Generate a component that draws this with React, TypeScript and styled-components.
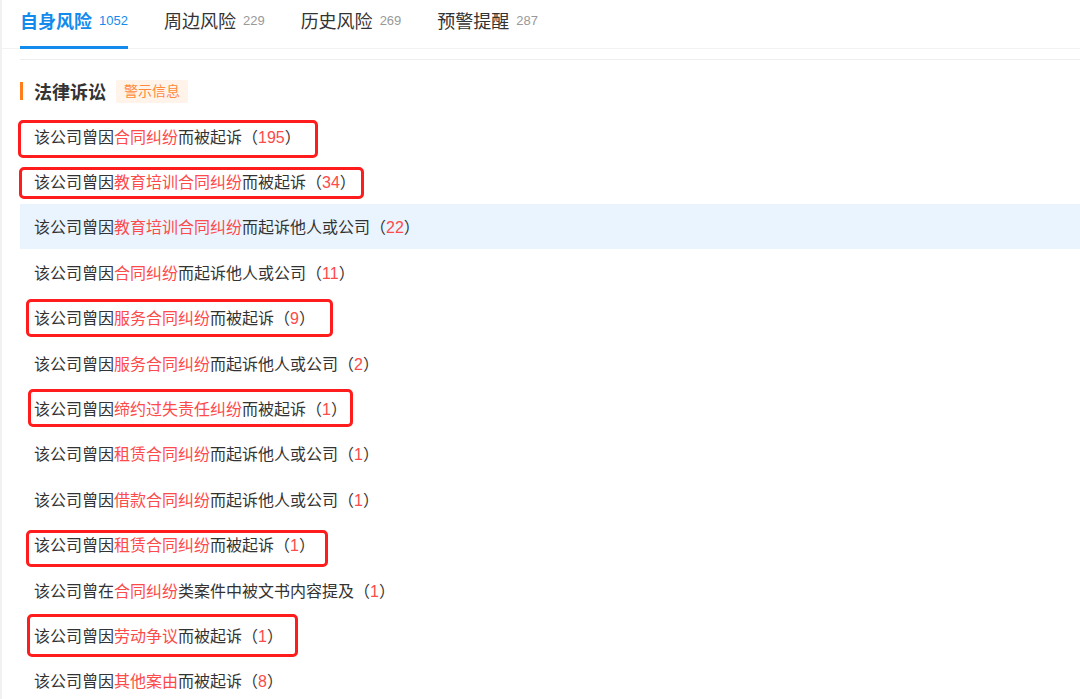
import { type FC } from "react";
import styled, { createGlobalStyle } from "styled-components";

const GlobalStyle = createGlobalStyle`
  html, body {
    margin: 0;
    padding: 0;
    background: #fff;
    font-family: "Liberation Sans", "Noto Sans CJK SC", sans-serif;
    color: #333;
  }
`;

interface Box {
  left: number;
  top: number;
  width: number;
  height: number;
}

interface RiskItem {
  lead: string;
  cause: string;
  tail: string;
  count: number;
  active?: boolean;
  box?: Box;
}

const tabs = [
  { name: "自身风险", count: 1052 },
  { name: "周边风险", count: 229 },
  { name: "历史风险", count: 269 },
  { name: "预警提醒", count: 287 },
];

const items: RiskItem[] = [
  { lead: "该公司曾因", cause: "合同纠纷", tail: "而被起诉", count: 195, box: { left: -2, top: 7, width: 300, height: 38 } },
  { lead: "该公司曾因", cause: "教育培训合同纠纷", tail: "而被起诉", count: 34, box: { left: -1, top: 9, width: 345, height: 32 } },
  { lead: "该公司曾因", cause: "教育培训合同纠纷", tail: "而起诉他人或公司", count: 22, active: true },
  { lead: "该公司曾因", cause: "合同纠纷", tail: "而起诉他人或公司", count: 11 },
  { lead: "该公司曾因", cause: "服务合同纠纷", tail: "而被起诉", count: 9, box: { left: 6, top: 4, width: 307, height: 38 } },
  { lead: "该公司曾因", cause: "服务合同纠纷", tail: "而起诉他人或公司", count: 2 },
  { lead: "该公司曾因", cause: "缔约过失责任纠纷", tail: "而被起诉", count: 1, box: { left: 8, top: 4, width: 325, height: 38 } },
  { lead: "该公司曾因", cause: "租赁合同纠纷", tail: "而起诉他人或公司", count: 1 },
  { lead: "该公司曾因", cause: "借款合同纠纷", tail: "而起诉他人或公司", count: 1 },
  { lead: "该公司曾因", cause: "租赁合同纠纷", tail: "而被起诉", count: 1, box: { left: 6, top: 8, width: 302, height: 37 } },
  { lead: "该公司曾在", cause: "合同纠纷", tail: "类案件中被文书内容提及", count: 1 },
  { lead: "该公司曾因", cause: "劳动争议", tail: "而被起诉", count: 1, box: { left: 7, top: 2, width: 271, height: 43 } },
  { lead: "该公司曾因", cause: "其他案由", tail: "而被起诉", count: 8 },
];

const App: FC = () => {
  return (
    <Page>
      <GlobalStyle />
      <TabBar>
        {tabs.map((tab, i) => (
          <Tab key={tab.name} $active={i === 0}>
            {tab.name}
            <TabCount $active={i === 0}>{tab.count}</TabCount>
          </Tab>
        ))}
      </TabBar>

      <Panel>
        <Heading>
          <HeadingTitle>法律诉讼</HeadingTitle>
          <Tag>警示信息</Tag>
        </Heading>

        <List>
          {items.map((item, i) => (
            <Row key={i} $active={item.active}>
              {item.lead}
              <Red>{item.cause}</Red>
              {item.tail}
              <Count>
                （<Red>{item.count}</Red>）
              </Count>
              {item.box && (
                <Mark
                  $left={item.box.left}
                  $top={item.box.top}
                  $width={item.box.width}
                  $height={item.box.height}
                />
              )}
            </Row>
          ))}
        </List>
      </Panel>
    </Page>
  );
};

export default App;

const Page = styled.div`
  min-height: 699px;
  border-left: 2px solid #f1f1f1;
  box-sizing: border-box;
  overflow: hidden;
`;

const TabBar = styled.div`
  display: flex;
  height: 48px;
  padding-left: 18px;
  border-bottom: 1px solid #f2f2f2;
`;

const Tab = styled.div<{ $active?: boolean }>`
  position: relative;
  display: flex;
  align-items: center;
  margin-right: 36px;
  padding-bottom: 8px;
  font-size: 18px;
  color: ${(p) => (p.$active ? "#128bed" : "#333")};
  font-weight: ${(p) => (p.$active ? 700 : 400)};

  &::after {
    content: "";
    display: ${(p) => (p.$active ? "block" : "none")};
    position: absolute;
    left: 0;
    right: 0;
    bottom: -1px;
    height: 3px;
    background: #128bed;
  }
`;

const TabCount = styled.span<{ $active?: boolean }>`
  margin-left: 7px;
  font-size: 13px;
  font-weight: 400;
  color: ${(p) => (p.$active ? "#128bed" : "#999")};
`;

const Panel = styled.div`
  margin: 10px 0 0 18px;
  border-top: 1px solid #eeeeee;
`;

const Heading = styled.div`
  display: flex;
  align-items: center;
  height: 24px;
  margin-top: 19px;
  margin-bottom: 10px;
  padding-left: 14px;
  position: relative;

  &::before {
    content: "";
    position: absolute;
    left: 0;
    top: 3px;
    width: 3px;
    height: 18px;
    background: #ff7d1a;
  }
`;

const HeadingTitle = styled.span`
  font-size: 18px;
  font-weight: 700;
  color: #333;
`;

const Tag = styled.span`
  margin-left: 10px;
  padding: 0 8px;
  height: 23px;
  line-height: 23px;
  font-size: 14px;
  color: #ff8a3d;
  background: #fff3ea;
  border-radius: 2px;
`;

const List = styled.div`
  display: flex;
  flex-direction: column;
`;

const Row = styled.div<{ $active?: boolean }>`
  position: relative;
  display: flex;
  align-items: center;
  height: 45.4px;
  padding-left: 14px;
  font-size: 16px;
  color: #333;
  white-space: nowrap;
  background: ${(p) => (p.$active ? "#eaf4fe" : "transparent")};
`;

const Red = styled.span`
  color: #fd4a4a;
`;

const Count = styled.span`
  color: #333;
`;

const Mark = styled.span<{ $left: number; $top: number; $width: number; $height: number }>`
  position: absolute;
  left: ${(p) => p.$left}px;
  top: ${(p) => p.$top}px;
  width: ${(p) => p.$width}px;
  height: ${(p) => p.$height}px;
  box-sizing: border-box;
  border: 3px solid #ff1c1c;
  border-radius: 5px;
  pointer-events: none;
`;
